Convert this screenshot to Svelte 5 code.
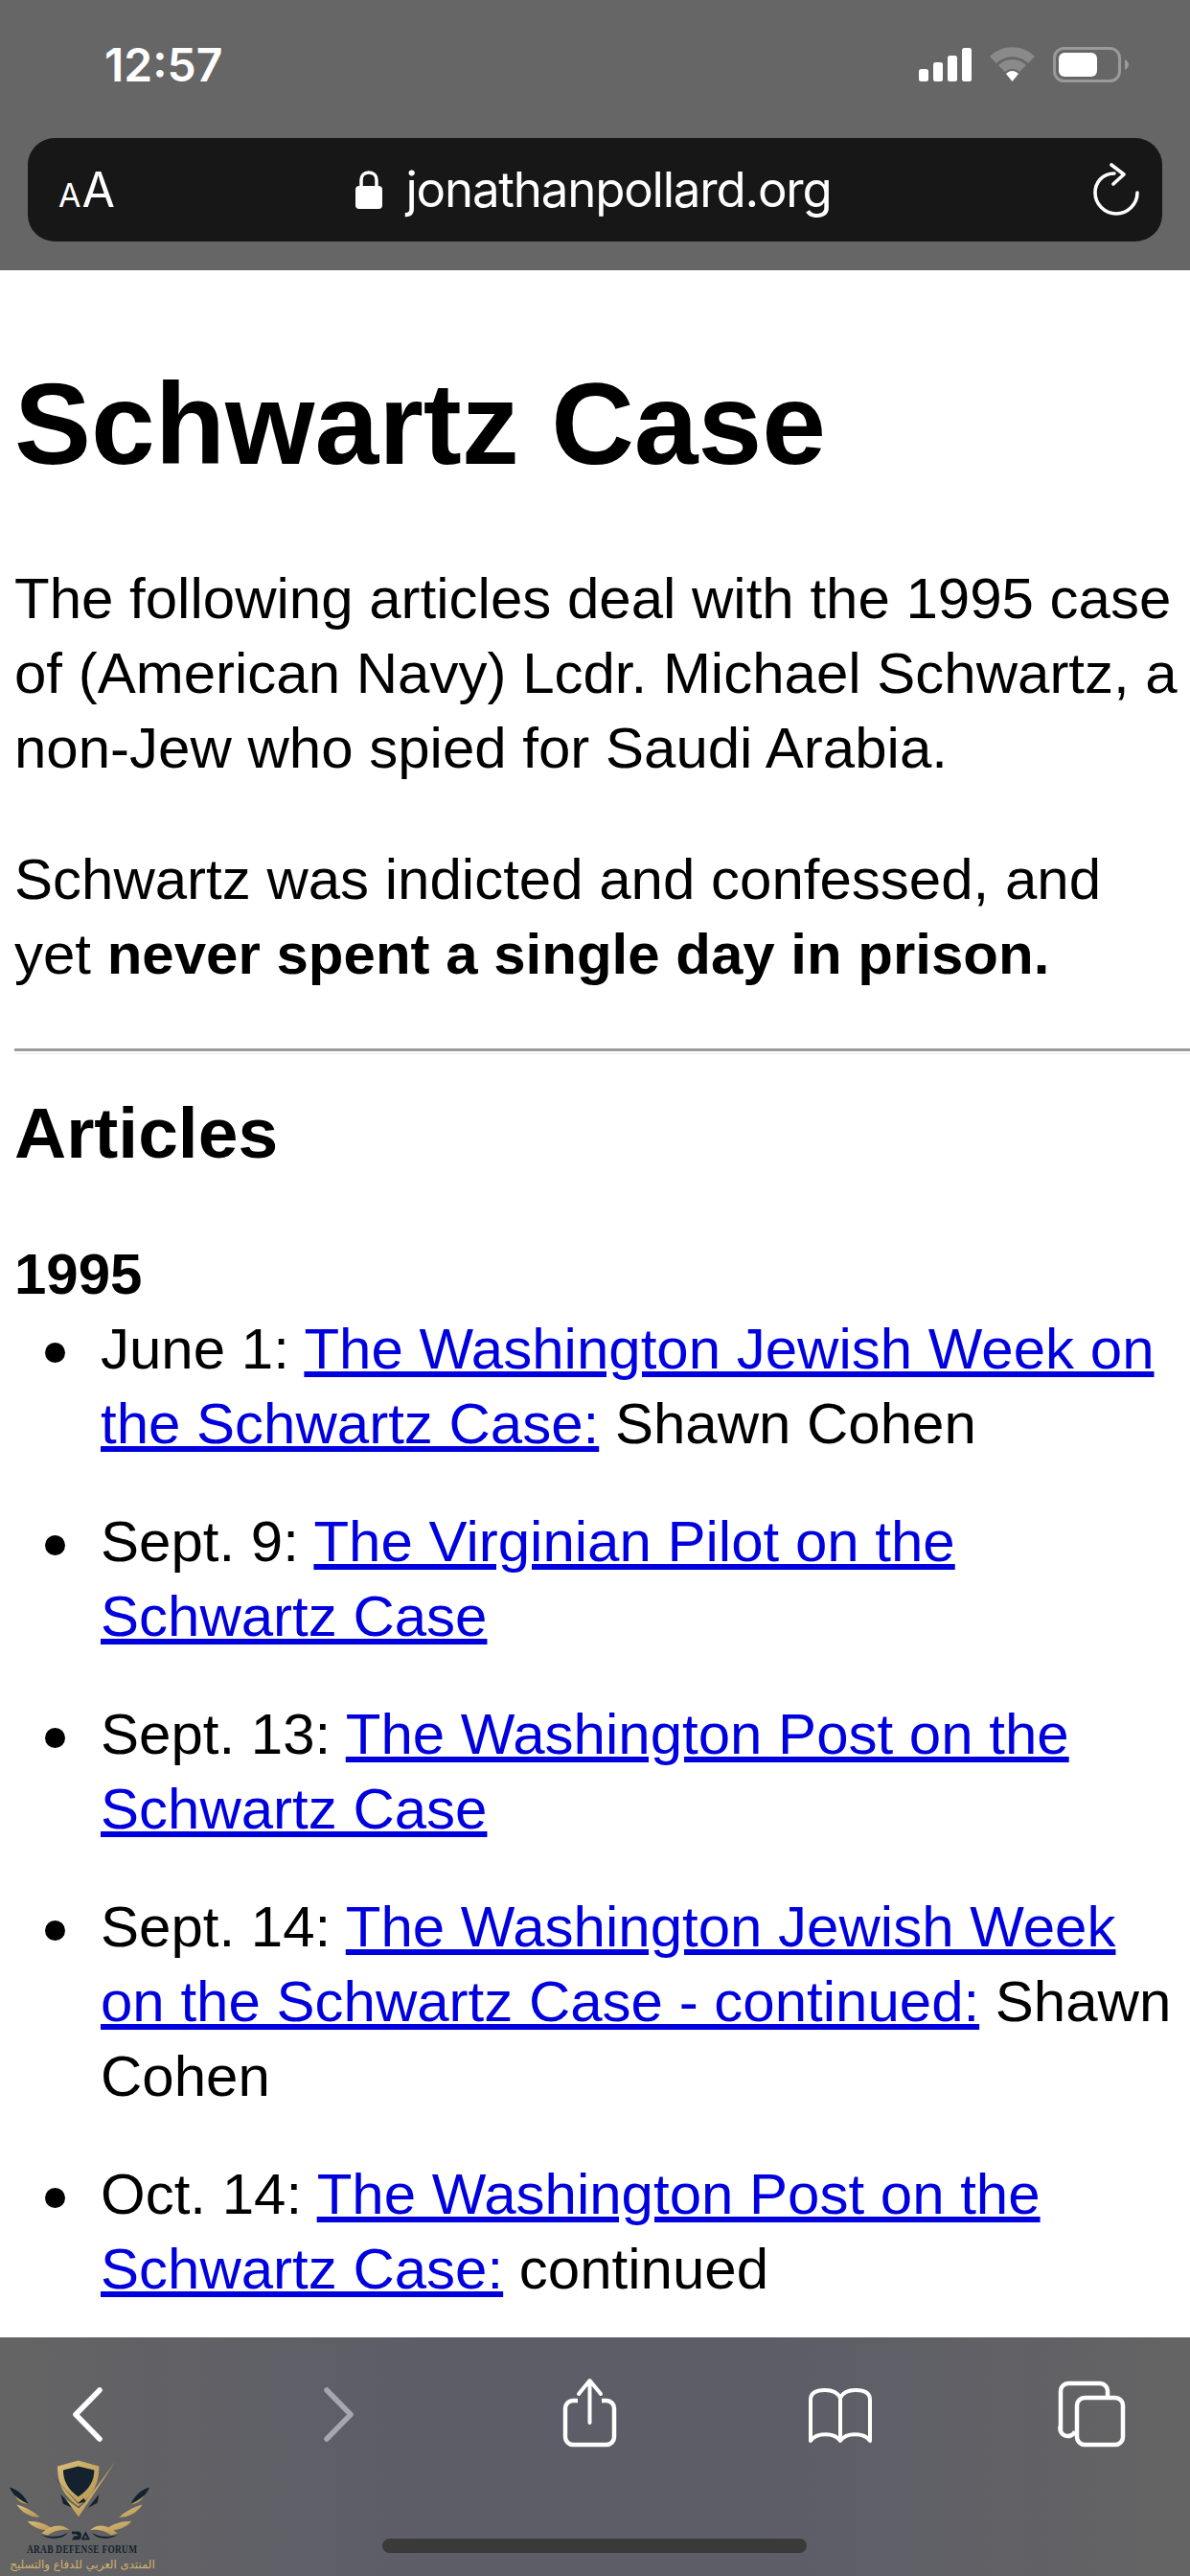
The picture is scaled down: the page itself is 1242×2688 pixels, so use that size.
<script>
  const items = [
    { lead: 'June 1: ', link: 'The Washington Jewish Week on the Schwartz Case:', tail: ' Shawn Cohen' },
    { lead: 'Sept. 9: ', link: 'The Virginian Pilot on the Schwartz Case', tail: '' },
    { lead: 'Sept. 13: ', link: 'The Washington Post on the Schwartz Case', tail: '' },
    { lead: 'Sept. 14: ', link: 'The Washington Jewish Week on the Schwartz Case - continued:', tail: ' Shawn Cohen' },
    { lead: 'Oct. 14: ', link: 'The Washington Post on the Schwartz Case:', tail: ' continued' }
  ];
</script>

<div class="phone">
  <header class="top">
    <div class="status">
      <span class="time">12:57</span>
      <svg class="status-icons" viewBox="958 49 219 37" width="219" height="37" aria-hidden="true">
        <rect x="958" y="72" width="10" height="13" rx="2.5" fill="#fff" />
        <rect x="973" y="65" width="10" height="20" rx="2.5" fill="#fff" />
        <rect x="988" y="58" width="10" height="27" rx="2.5" fill="#fff" />
        <rect x="1003" y="50" width="10" height="35" rx="2.5" fill="#fff" />
        <path d="M1032 59 C1045 46 1066 46 1079 59 L1072 66 C1063 57 1048 57 1039 66 Z" fill="#8a8a8a" />
        <path d="M1041 68 C1049 60 1062 60 1070 68 L1063 75 C1059 71 1052 71 1048 75 Z" fill="#8a8a8a" />
        <path d="M1049 77 C1053 73 1058 73 1062 77 L1055.5 85 Z" fill="#fff" />
        <rect x="1099.5" y="50.5" width="68" height="34" rx="10" fill="none" stroke="#9a9a9a" stroke-width="3" />
        <rect x="1104" y="55" width="40" height="25" rx="6" fill="#fff" />
        <path d="M1173 62 C1176 64 1177 66 1177 67.5 C1177 69 1176 71 1173 73 Z" fill="#9a9a9a" />
      </svg>
    </div>
    <div class="urlbar">
      <span class="aa"><span class="small">A</span><span class="big">A</span></span>
      <span class="addr">
        <svg viewBox="0 0 28 40" width="28" height="40" aria-hidden="true">
          <path d="M6 18 V10 C6 5 9 2 14 2 C19 2 22 5 22 10 V18" fill="none" stroke="#fff" stroke-width="3.5" />
          <rect x="0" y="16" width="28" height="24" rx="4" fill="#fff" />
        </svg>
        <span class="host">jonathanpollard.org</span>
      </span>
      <svg class="reload" viewBox="0 0 52 56" width="52" height="56" aria-hidden="true">
        <path d="M23 11 C10 11 3 21 3 31 C3 43 13 53 25 53 C37 53 47 43 47 31" fill="none" stroke="#fff" stroke-width="3.6" stroke-linecap="round" />
        <path d="M20 2 L33 12 L22 22" fill="none" stroke="#fff" stroke-width="3.6" stroke-linecap="round" stroke-linejoin="round" />
      </svg>
    </div>
  </header>

  <main class="page">
    <h1>Schwartz Case</h1>
    <p>The following articles deal with the 1995 case of (American Navy) Lcdr. Michael Schwartz, a non-Jew who spied for Saudi Arabia.</p>
    <p>Schwartz was indicted and confessed, and yet <strong>never spent a single day in prison.</strong></p>
    <hr />
    <h2>Articles</h2>
    <strong class="year">1995</strong>
    <ul>
      {#each items as item}
        <li>{item.lead}<a href="#top">{item.link}</a>{item.tail}</li>
      {/each}
    </ul>
  </main>

  <footer class="bottom">
    <div class="tools">
      <svg viewBox="0 0 100 90" width="100" height="90" aria-hidden="true">
        <path d="M63 19 L38 44.5 L63 70" fill="none" stroke="#fff" stroke-width="5.5" stroke-linecap="round" stroke-linejoin="round" />
      </svg>
      <svg viewBox="0 0 100 90" width="100" height="90" aria-hidden="true">
        <path d="M38 19 L63 44.5 L38 70" fill="none" stroke="#a6a6ac" stroke-width="5.5" stroke-linecap="round" stroke-linejoin="round" />
      </svg>
      <svg viewBox="0 0 100 90" width="100" height="90" aria-hidden="true">
        <path d="M38 30 H33 A8 8 0 0 0 25 38 V68 A8 8 0 0 0 33 76 H68 A8 8 0 0 0 76 68 V38 A8 8 0 0 0 68 30 H63" fill="none" stroke="#fff" stroke-width="4.5" />
        <path d="M50.5 53 V10 M39 23 L50.5 9 L62 23" fill="none" stroke="#fff" stroke-width="4" stroke-linecap="round" stroke-linejoin="round" />
      </svg>
      <svg viewBox="0 0 100 90" width="100" height="90" aria-hidden="true">
        <path d="M50 27 C47 21 42 19 34 19 C25 19 19 22 19 29 V72 C25 63 44 63 50 72 C56 63 75 63 81 72 V29 C81 22 75 19 66 19 C58 19 53 21 50 27 V70" fill="none" stroke="#fff" stroke-width="4" stroke-linejoin="round" />
      </svg>
      <svg viewBox="0 0 100 90" width="100" height="90" aria-hidden="true">
        <path d="M18 61 V20 A8 8 0 0 1 26 12 H59 A8 8 0 0 1 67 20 V26 M18 56 A7 7 0 0 0 33 62" fill="none" stroke="#fff" stroke-width="4.5" />
        <rect x="35" y="27" width="48" height="49" rx="8" fill="none" stroke="#fff" stroke-width="4.5" />
      </svg>
    </div>
    <div class="home"></div>
  </footer>

  <div class="logo">
    <svg viewBox="0 0 600 290" width="200" height="97" aria-hidden="true">
      <defs>
        <linearGradient id="gold" x1="0" y1="0" x2="1" y2="1">
          <stop offset="0" stop-color="#d9bd7b" />
          <stop offset="1" stop-color="#b59450" />
        </linearGradient>
      </defs>
      <path d="M180 40 L245 22 L310 40 C310 90 295 130 245 165 C195 130 180 90 180 40 Z" fill="url(#gold)" />
      <path d="M198 52 L245 40 L295 52 C295 85 280 112 245 135 C212 112 198 85 198 52 Z" fill="#13222e" />
      <path d="M153 57 L245 155 L262 140 L270 150 L245 157 Z" fill="#13222e" />
      <path d="M190 128 L232 172 L198 158 Z M310 128 L276 170 L305 155 Z" fill="#13222e" />
      <path d="M205 142 L246 198 L362 25 L262 158 L246 172 Z" fill="url(#gold)" />
      <path d="M30 106 C55 112 80 135 88 158 C62 150 40 130 30 106 Z" fill="#13222e" />
      <path d="M48 132 C60 145 78 152 88 158 C70 158 55 148 48 132 Z" fill="url(#gold)" />
      <path d="M468 106 C443 112 418 135 410 158 C436 150 458 130 468 106 Z" fill="#13222e" />
      <path d="M450 132 C438 145 420 152 410 158 C428 158 443 148 450 132 Z" fill="url(#gold)" />
      <path d="M52 160 C80 168 108 182 125 200 C95 200 68 185 52 160 Z" fill="url(#gold)" />
      <path d="M446 160 C418 168 390 182 373 200 C403 200 430 185 446 160 Z" fill="url(#gold)" />
      <path d="M86 212 C120 212 150 222 168 240 C135 244 105 234 86 212 Z" fill="url(#gold)" />
      <path d="M412 212 C378 212 348 222 330 240 C363 244 393 234 412 212 Z" fill="url(#gold)" />
      <path d="M130 250 C160 222 195 218 218 240 C190 236 165 244 150 256 Z" fill="url(#gold)" />
      <path d="M130 255 C165 262 190 262 212 248 C200 268 160 272 130 255 Z" fill="#13222e" />
      <path d="M368 250 C338 222 303 218 282 240 C310 236 333 244 348 256 Z" fill="url(#gold)" />
      <path d="M368 255 C333 262 308 262 288 248 C300 268 338 272 368 255 Z" fill="#13222e" />
      <path d="M225 244 H245 C258 244 258 270 245 270 H225 L232 258 H246 L238 252 H225 Z" fill="#13222e" />
      <path d="M268 243 L282 270 H254 Z M268 255 L263 265 H273 Z" fill="#13222e" fill-rule="evenodd" />
    </svg>
    <span class="en">ARAB DEFENSE FORUM</span>
    <span class="ar" dir="rtl">المنتدى العربي للدفاع والتسليح</span>
  </div>
</div>

<style>
  :global(body) {
    margin: 0;
    background: #fff;
  }

  .phone {
    position: relative;
    width: 1242px;
    height: 2688px;
    display: flex;
    flex-direction: column;
    overflow: hidden;
    font-family: "Liberation Sans", Arial, sans-serif;
    color: #000;
  }

  .top {
    flex: none;
    height: 282px;
    box-sizing: border-box;
    padding: 44px 29px 0;
    background: #666;
    color: #fff;
  }

  .status {
    display: flex;
    justify-content: space-between;
    align-items: center;
    height: 47px;
    padding: 0 35px 0 80px;
  }

  .time {
    font-family: Inter, "Liberation Sans", sans-serif;
    font-size: 48px;
    font-weight: 600;
    line-height: 47px;
  }

  .status-icons {
    display: block;
  }

  .urlbar {
    display: grid;
    grid-template-columns: 1fr auto 1fr;
    align-items: center;
    height: 108px;
    margin-top: 53px;
    padding: 0 21px 0 32px;
    border-radius: 28px;
    background: #171717;
  }

  .aa {
    display: flex;
    align-items: baseline;
    gap: 1px;
    font-family: Inter, "Liberation Sans", sans-serif;
    line-height: 1;
  }

  .small {
    font-size: 34px;
  }

  .big {
    font-size: 50px;
  }

  .addr {
    display: flex;
    align-items: center;
    gap: 24px;
    margin-left: -14px;
  }

  .host {
    font-family: Inter, "Liberation Sans", sans-serif;
    font-size: 51px;
    font-weight: 400;
    line-height: 60px;
    letter-spacing: -1.2px;
  }

  .reload {
    justify-self: end;
  }

  .page {
    flex: 1;
    min-height: 0;
    overflow: hidden;
    padding: 0 0 0 15px;
    font-size: 60px;
    line-height: 78px;
  }

  h1 {
    margin: 82px 0 66px;
    font-size: 120px;
    line-height: 156px;
  }

  p {
    margin: 0 0 59px;
  }

  hr {
    margin: 0;
    height: 2px;
    border: none;
    border-top: 3px solid #9a9a9a;
    border-bottom: 1px solid #eee;
  }

  h2 {
    margin: 24px 0 50px;
    font-size: 75px;
    line-height: 117px;
  }

  .year {
    display: block;
  }

  ul {
    margin: 0;
    padding: 0 0 0 90px;
    list-style: none;
  }

  li {
    position: relative;
    margin-bottom: 45px;
  }

  li::before {
    content: "";
    position: absolute;
    left: -58px;
    top: 32px;
    width: 21px;
    height: 21px;
    border-radius: 50%;
    background: #000;
  }

  a {
    color: #0000de;
    text-decoration: underline;
  }

  .bottom {
    flex: none;
    height: 249px;
    box-sizing: border-box;
    padding-top: 36px;
    background: linear-gradient(90deg, #646464 0%, #5d5d68 35%, #5d5d68 65%, #646464 100%);
  }

  .tools {
    display: flex;
    gap: 162px;
    padding-left: 41px;
  }

  .tools svg {
    display: block;
  }

  .home {
    width: 443px;
    height: 15px;
    margin: 84px 0 0 399px;
    border-radius: 8px;
    background: #3a3a3a;
  }

  .logo {
    position: absolute;
    left: 0;
    top: 2560px;
    width: 172px;
    height: 128px;
    display: flex;
    flex-direction: column;
    align-items: center;
    overflow: hidden;
  }

  .logo svg {
    display: block;
    flex: none;
    margin-left: 28px;
  }

  .en {
    margin-top: -3px;
    font-family: "Liberation Serif", serif;
    font-size: 13.5px;
    font-weight: 700;
    line-height: 11px;
    letter-spacing: 0.5px;
    color: #13222e;
    white-space: nowrap;
    transform: scaleX(0.69);
  }

  .ar {
    margin-top: 3px;
    font-family: "DejaVu Sans", "Noto Sans", sans-serif;
    font-size: 11.8px;
    line-height: 16px;
    color: #d2b26c;
    white-space: nowrap;
  }
</style>
